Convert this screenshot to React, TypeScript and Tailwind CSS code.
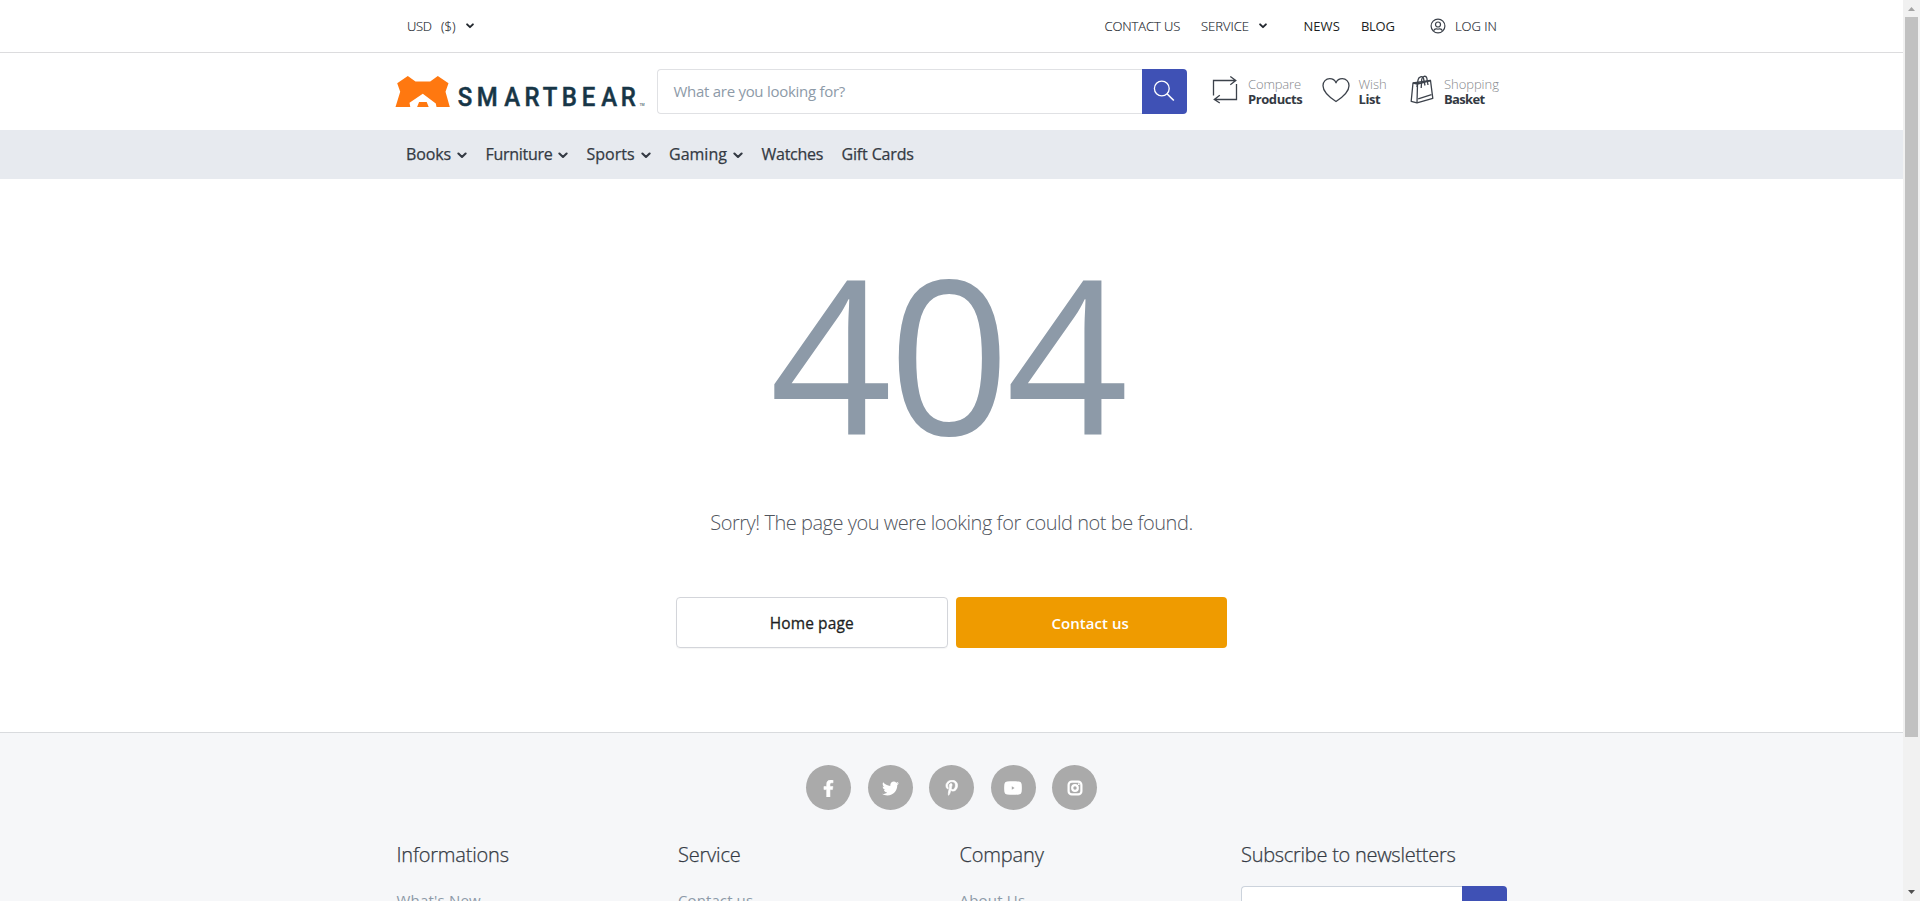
import React from "react";
import { FaFacebookF, FaTwitter, FaPinterestP } from "react-icons/fa";

function Chevron({ className = "" }: { className?: string }) {
  return (
    <svg viewBox="0 0 10 7" className={"h-[7px] w-[10px] shrink-0 " + className} fill="none" stroke="currentColor" strokeWidth="2.1" strokeLinecap="round" strokeLinejoin="round">
      <path d="M1.4 1.5 L5 5 L8.6 1.5" />
    </svg>
  );
}

function SmallChevron({ className = "" }: { className?: string }) {
  return (
    <svg viewBox="0 0 8 6" className={"h-[6px] w-[8px] shrink-0 " + className} fill="none" stroke="currentColor" strokeWidth="1.9" strokeLinecap="round" strokeLinejoin="round">
      <path d="M1.1 1.3 L4 4.2 L6.9 1.3" />
    </svg>
  );
}

function Logo() {
  return (
    <svg viewBox="0 0 252 34" className="h-[34px] w-[252px] shrink-0">
      <path
        fill="#ff7810"
        fillRule="evenodd"
        d="M0.5 32 L5.2 16.7 L2.2 8.3 L12.8 1 L20.500 6.5 H35.2 L42.800 1 L53.500 8.3 L50.500 16.7 L54.800 32 H41.500 L40.800 28.5 L27.800 18.7 L14.500 27.7 L15.3 32Z M24.1 27 H31.7 L33.7 32 H22.1Z"
      />
      <g fontFamily="Roboto, sans-serif" fill="#173647">
        <text transform="translate(0 31) scale(0.92 1)" y="0" fontSize="26" fontWeight="500" stroke="#173647" strokeWidth="0.5" x="68.3 88.8 118.8 140.7 160.5 181.2 203 224.2 245.3">
          SMARTBEAR
        </text>
        <text x="244.5" y="30.5" fontSize="3.5">TM</text>
      </g>
    </svg>
  );
}

function UserIcon() {
  return (
    <svg viewBox="0 0 16 16" className="-mt-px size-4 shrink-0" fill="none" stroke="#3c424b" strokeWidth="1.2">
      <circle cx="8" cy="8" r="6.9" />
      <circle cx="8" cy="6.5" r="2.5" />
      <path d="M3.6 12.8 C4.2 11.2 5.3 10.7 6.3 10.8 C7.4 11.3 8.6 11.3 9.7 10.8 C10.7 10.7 11.8 11.2 12.4 12.8" />
    </svg>
  );
}

function SearchIcon() {
  return (
    <svg viewBox="0 0 22 22" className="size-[22px]" fill="none" stroke="#fff" strokeWidth="1.3">
      <circle cx="8.8" cy="8.5" r="7.4" />
      <path d="M14 13.7 L20.8 20.5" strokeWidth="1.6" />
    </svg>
  );
}

function CompareIcon() {
  return (
    <svg viewBox="0 0 26 28" className="h-[28px] w-[26px] shrink-0" fill="none" stroke="#3c424b" strokeWidth="1.3">
      <path d="M1.5 19.5 V4.5 H23.5 M18.3 0.5 L23.8 4.5 L18.3 8.7" />
      <path d="M24.5 8 V23.5 H2.5 M7.8 19.2 L2.3 23.5 L7.8 27" />
    </svg>
  );
}

function HeartIcon() {
  return (
    <svg viewBox="0 0 28 26" className="h-[26px] w-[28px] shrink-0" fill="none" stroke="#3c424b" strokeWidth="1.3" strokeLinejoin="round">
      <path d="M14 24.5 C9 21.2 1 15.5 1 8.7 C1 4.5 4 1.7 7.7 1.7 C10.5 1.7 12.9 3.2 14 5.8 C15.1 3.2 17.5 1.7 20.3 1.7 C24 1.7 27 4.5 27 8.7 C27 15.5 19 21.2 14 24.5Z" />
    </svg>
  );
}

function BasketIcon() {
  return (
    <svg viewBox="0 0 24 29" className="-ml-px h-[29px] w-[24px] shrink-0" fill="none" stroke="#3c424b" strokeWidth="1.3" strokeLinejoin="round">
      <path d="M3 8 L20.5 5.5 L22.8 23.3 L7 27.8 L1.2 26.3Z" />
      <path d="M3 8 L7.5 9 L20.5 5.5 M7.5 9 L7 27.8" />
      <path d="M8.2 23.8 L21.5 19.7" />
      <path d="M7 12 L8 5 C8.5 1.8 12.5 0.3 13.5 3.3 L15 10.5" />
      <path d="M11.2 13 L11.7 4.5 C12.2 1 15.8 0.2 16.8 3 L18 10" />
    </svg>
  );
}

type ActionProps = {
  icon: React.ReactNode;
  top: string;
  bottom: string;
  topClass: string;
  bottomClass: string;
  className: string;
};

function Action({ icon, top, bottom, topClass, bottomClass, className }: ActionProps) {
  return (
    <a className={"flex h-[46px] shrink-0 items-center whitespace-nowrap " + className}>
      <span className="-mt-1 flex">{icon}</span>
      <span className="flex flex-col text-[13px] leading-[15px]">
        <span className={"font-light text-[#85878c] " + topClass}>{top}</span>
        <span className={"font-bold text-[#343a43] " + bottomClass}>{bottom}</span>
      </span>
    </a>
  );
}

const navItems = [
  { label: "Books", menu: true, box: "w-[79.5px]", text: "tracking-[-0.1px]" },
  { label: "Furniture", menu: true, box: "w-[101px]", text: "tracking-[-0.28px]" },
  { label: "Sports", menu: true, box: "w-[82.5px]", text: "tracking-[0px]" },
  { label: "Gaming", menu: true, box: "w-[92.5px]", text: "tracking-[0px]" },
  { label: "Watches", menu: false, box: "w-[80px]", text: "tracking-[-0.25px]" },
  { label: "Gift Cards", menu: false, box: "w-[80px]", text: "tracking-[-0.15px]" },
];

const socials = [
  <FaFacebookF key="facebook" className="h-[17px] w-[13px]" stroke="currentColor" strokeWidth="16" />,
  <FaTwitter key="twitter" className="size-[17px]" />,
  <FaPinterestP key="pinterest" className="size-[15.5px]" stroke="currentColor" strokeWidth="22" />,
  <svg key="youtube" viewBox="0 0 18 14" className="h-[14px] w-[18px]" fill="currentColor">
    <path fillRule="evenodd" d="M3 0.6 C7 0.2 11 0.2 15 0.6 Q17.3 0.9 17.6 3 Q18.1 7 17.6 11 Q17.3 13.1 15 13.4 C11 13.8 7 13.8 3 13.4 Q0.7 13.1 0.4 11 Q-0.1 7 0.4 3 Q0.7 0.9 3 0.6Z M7.800 5.3 V8.7 L10.6 7Z" />
  </svg>,
  <svg key="instagram" viewBox="0 0 16 16" className="size-4" fill="none" stroke="currentColor">
    <rect x="1.6" y="1.6" width="12.8" height="12.8" rx="3.2" strokeWidth="2.2" />
    <circle cx="8" cy="8" r="2.8" strokeWidth="2.2" />
    <circle cx="11.8" cy="4.2" r="0.9" fill="currentColor" stroke="none" />
  </svg>,
];

const columns = [
  { title: "Informations", link: "What's New", titleClass: "tracking-[-0.2px]", linkClass: "tracking-[0.2px]" },
  { title: "Service", link: "Contact us", titleClass: "tracking-[-0.2px]", linkClass: "tracking-[0.1px]" },
  { title: "Company", link: "About Us", titleClass: "tracking-[-0.15px]", linkClass: "tracking-[0.2px]" },
];

function Scrollbar() {
  return (
    <div className="flex h-full w-[17px] shrink-0 flex-col items-center justify-between bg-[#f1f1f1]">
      <div className="flex flex-col items-center">
        <svg viewBox="0 0 17 17" className="size-[17px]" fill="#a3a3a3"><path d="M5 11 L8.5 7 L12 11Z" /></svg>
        <div className="h-[720px] w-[13px] bg-[#c1c1c1]" />
      </div>
      <svg viewBox="0 0 17 17" className="size-[17px]" fill="#505050"><path d="M5 6 L8.5 10 L12 6Z" /></svg>
    </div>
  );
}

export default function App() {
  return (
    <div className="flex h-[901px] w-[1920px] overflow-hidden bg-white font-['Open_Sans','Noto_Sans',sans-serif] text-[#343a43]">
      <div className="flex min-w-0 flex-1 flex-col overflow-hidden">
        <div className="h-[53px] shrink-0 border-b border-[#dcdcde]">
          <div className="mx-auto flex h-[53px] w-[1110px] items-center text-[13px] font-light whitespace-nowrap text-[#23282f] [-webkit-text-stroke:0.15px_currentColor]">
            <span className="ml-[10.5px] w-[34px] tracking-[-0.3px]">USD</span>
            <span className="w-[24.5px]">($)</span>
            <SmallChevron className="-mt-px" />
            <span className="ml-[631px] w-[96.5px] tracking-[-0.1px]">CONTACT US</span>
            <span className="w-[57.5px] tracking-[0px]">SERVICE</span>
            <SmallChevron className="-mt-px" />
            <span className="ml-[37px] w-[57.5px] font-normal text-[#1d1f23] tracking-[0.05px] [-webkit-text-stroke:0]">NEWS</span>
            <span className="w-[69px] font-normal text-[#1d1f23] tracking-[-0.3px] [-webkit-text-stroke:0]">BLOG</span>
            <UserIcon />
            <span className="ml-[9px] tracking-[-0.05px]">LOG IN</span>
          </div>
        </div>

        <header className="h-[77px] shrink-0">
          <div className="mx-auto flex h-[77px] w-[1110px] items-center">
            <div className="-ml-[2px] flex w-[262.5px] shrink-0 pt-px"><Logo /></div>
            <div className="flex h-[45px] w-[530px] shrink-0">
              <div className="flex flex-1 items-center rounded-l-[4px] border border-r-0 border-[#e0e1e4] pl-[15.5px] text-[15px] tracking-[-0.28px] text-[#8d9aa8]">What are you looking for?</div>
              <button className="flex w-[45px] items-center justify-center rounded-r-[4px] bg-[#3f51b5] pr-[2px] pb-[2px]"><SearchIcon /></button>
            </div>
            <Action icon={<CompareIcon />} top="Compare" bottom="Products" topClass="ml-[10.5px] tracking-[-0.15px]" bottomClass="ml-[10.5px] tracking-[-0.42px]" className="ml-[24.5px] w-[110.5px]" />
            <Action icon={<HeartIcon />} top="Wish" bottom="List" topClass="ml-[8.5px] tracking-[0px]" bottomClass="ml-[8.5px] tracking-[-0.4px]" className="w-[89px]" />
            <Action icon={<BasketIcon />} top="Shopping" bottom="Basket" topClass="ml-[10px] tracking-[-0.05px]" bottomClass="ml-[10px] tracking-[-0.65px]" className="" />
          </div>
        </header>

        <nav className="h-[49px] shrink-0 bg-[#e7eaef]">
          <div className="mx-auto flex h-full w-[1110px] items-center pb-px pl-[9.5px]">
            {navItems.map((n) => (
              <a key={n.label} className={"flex shrink-0 items-center text-[16px] whitespace-nowrap [-webkit-text-stroke:0.25px_currentColor] " + n.box}>
                <span className={n.text}>{n.label}</span>
                {n.menu && <Chevron className="mt-[3px] ml-[6px]" />}
              </a>
            ))}
          </div>
        </nav>

        <main className="flex h-[553px] shrink-0 flex-col items-center">
          <h1 className="mt-[65px] mr-[9px] h-[214px] text-[214px] leading-[216px] tracking-[-4.2px] text-[#8d9aa8]">404</h1>
          <p className="mt-[50px] h-[30px] text-[20px] leading-[30px] font-light tracking-[-0.47px] text-[#50555e]">Sorry! The page you were looking for could not be found.</p>
          <div className="mt-[59px] flex w-[551px] gap-[8px] text-[15px]">
            <button className="h-[51px] flex-1 rounded-[4px] border border-[#d3d5da] pt-[2px] text-[15.5px] tracking-[0.1px] text-[#1d1f23] shadow-[0_1px_1px_rgba(0,0,0,0.04)] [-webkit-text-stroke:0.3px_currentColor]">Home page</button>
            <button className="h-[51px] flex-1 rounded-[4px] bg-[#ef9b00] pt-px pr-[2px] font-semibold tracking-[0.05px] text-white">Contact us</button>
          </div>
        </main>

        <footer className="flex-1 border-t border-[#d9dbde] bg-[#f6f7f9]">
          <div className="mt-[32px] flex justify-center gap-[16.5px]">
            {socials.map((s, i) => (
              <a key={i} className="flex size-[45px] items-center justify-center rounded-full bg-[#aaaaaa] pt-px text-white">{s}</a>
            ))}
          </div>
          <div className="mx-auto mt-[30px] flex w-[1110px] whitespace-nowrap">
            {columns.map((c) => (
              <div key={c.title} className="w-[281.5px] shrink-0">
                <h2 className={"h-[30px] text-[20px] leading-[30px] font-light [-webkit-text-stroke:0.25px_currentColor] " + c.titleClass}>{c.title}</h2>
                <a className={"mt-[17.5px] block text-[15px] leading-[24px] text-[#8d9aa8] " + c.linkClass}>{c.link}</a>
              </div>
            ))}
            <div className="w-[266px] shrink-0">
              <h2 className="h-[30px] text-[20px] leading-[30px] font-light tracking-[-0.27px] [-webkit-text-stroke:0.25px_currentColor]">Subscribe to newsletters</h2>
              <div className="mt-[16px] flex h-[45px]">
                <div className="flex-1 rounded-l-[4px] border border-r-0 border-[#ccd3dc] bg-white" />
                <div className="w-[45px] rounded-r-[4px] bg-[#3f51b5]" />
              </div>
            </div>
          </div>
        </footer>
      </div>
      <Scrollbar />
    </div>
  );
}
